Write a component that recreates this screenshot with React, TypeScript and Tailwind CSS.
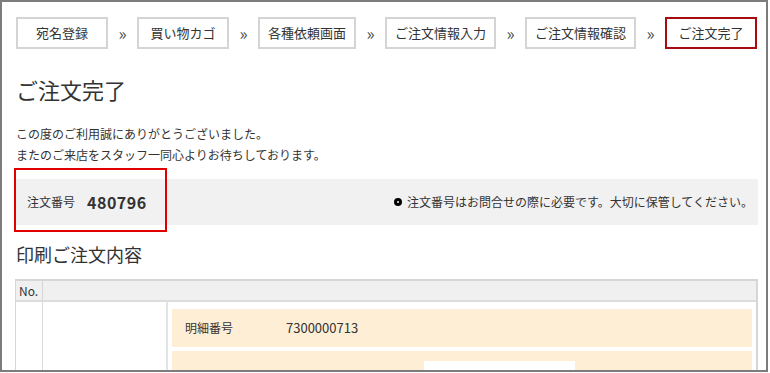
import React from "react";

const steps = [
  "宛名登録",
  "買い物カゴ",
  "各種依頼画面",
  "ご注文情報入力",
  "ご注文情報確認",
  "ご注文完了",
];

const font = { fontFamily: '"Noto Sans CJK JP", "Noto Sans", sans-serif' };

const App: React.FC = () => {
  return (
    <div
      className="h-[373px] w-[770px] overflow-hidden bg-white text-[#333]"
      style={font}
    >
      <div className="h-[372px] w-[768px] overflow-hidden border-2 border-[#7c7c7c] pl-[14px] pr-[8px] pt-[15px]">
        {/* Breadcrumb */}
        <div className="flex items-center">
          {steps.map((step, i) => {
            const current = i === steps.length - 1;
            return (
              <React.Fragment key={step}>
                {i > 0 && (
                  <span className="w-[29px] pb-[2px] text-center text-[17px] leading-none text-[#444]">
                    »
                  </span>
                )}
                <div
                  className={`flex h-[32px] min-w-[92px] items-center justify-center border-2 px-[8px] text-[13px] ${
                    current ? "border-[#a80c10]" : "border-[#d4d4d4]"
                  }`}
                >
                  {step}
                </div>
              </React.Fragment>
            );
          })}
        </div>

        <h1 className="mt-[24px] text-[22px] leading-[33px] font-normal">ご注文完了</h1>

        <p className="mt-[17px] text-[12px] leading-[21px]">
          この度のご利用誠にありがとうございました。
          <br />
          またのご来店をスタッフ一同心よりお待ちしております。
        </p>

        {/* Order number */}
        <div className="relative mt-[14px] flex h-[46px] items-center justify-between bg-[#f2f1f1] pl-[11px] pr-[5px]">
          <div className="flex items-center">
            <span className="text-[12px]">注文番号</span>
            <span className="ml-[12px] text-[16px] font-bold tracking-[0.5px]">480796</span>
          </div>
          <div className="flex items-center text-[12px]">
            <span className="mr-[5px] inline-block h-[8px] w-[8px] rounded-full border-[3px] border-black" />
            注文番号はお問合せの際に必要です。大切に保管してください。
          </div>
          <div className="absolute left-[-2px] top-[-11px] h-[64px] w-[153px] border-2 border-[#e10000]" />
        </div>

        <h2 className="mt-[16px] text-[18px] leading-[27px] font-normal">印刷ご注文内容</h2>

        {/* Table */}
        <div className="ml-[-1px] mt-[11px] border-l border-t-2 border-r-2 border-[#d6d6d6]">
          <div className="grid h-[21px] grid-cols-[27px_1fr] border-b-2 border-[#dcdcdc] bg-[#f0f0f0] text-[12px]">
            <div className="flex items-center border-r border-[#d6d6d6] pl-[3px]">No.</div>
            <div />
          </div>
          <div className="grid h-[80px] grid-cols-[27px_125px_1fr]">
            <div className="border-r border-[#d9d9d9]" />
            <div className="border-r-2 border-[#e4e4e4]" />
            <div className="flex flex-col gap-[4px] pl-[4px] pr-[4px] pt-[7px]">
              <div className="flex h-[38px] items-center bg-[#feeed6] pl-[13px] text-[12px]">
                <span className="w-[101px]">明細番号</span>
                <span className="text-[13px]">7300000713</span>
              </div>
              <div className="h-[40px] bg-[#feeed6] pl-[252px] pt-[10px]">
                <div className="h-full w-[151px] bg-white" />
              </div>
            </div>
          </div>
        </div>
      </div>
    </div>
  );
};

export default App;
